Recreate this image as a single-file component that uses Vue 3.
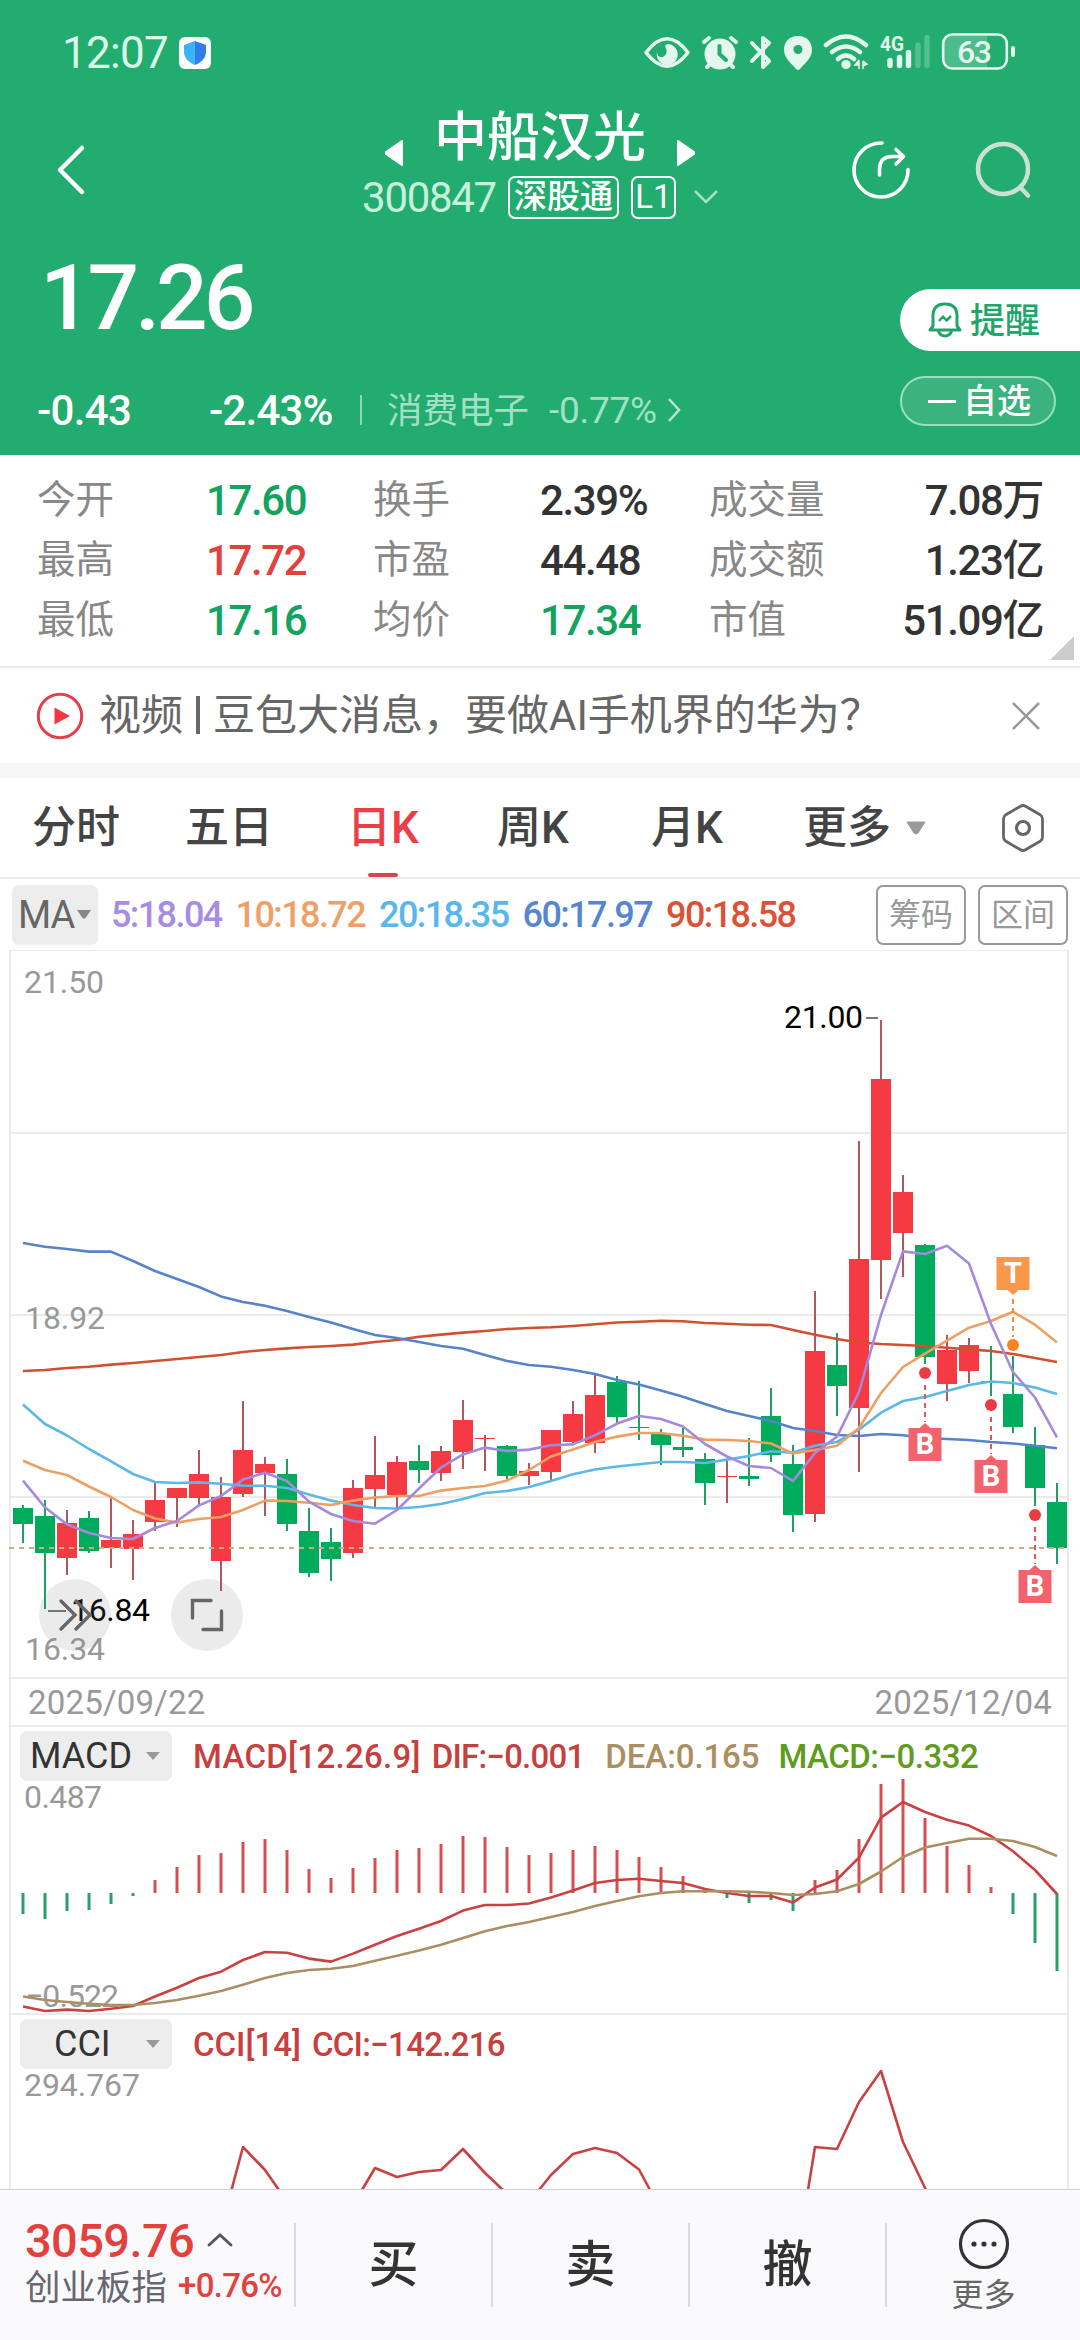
<script setup>
// candle: [direction, high, low, body top, body bottom], in chart canvas units
const candles = [
    ['down', 1505, 1543, 1508, 1524], ['down', 1500, 1609, 1516, 1553], ['up', 1510, 1575, 1523, 1558],
    ['down', 1511, 1553, 1518, 1551], ['up', 1498, 1568, 1540, 1548], ['up', 1520, 1580, 1534, 1549],
    ['up', 1483, 1531, 1500, 1522], ['up', 1488, 1527, 1488, 1498], ['up', 1450, 1505, 1474, 1498],
    ['up', 1477, 1591, 1497, 1561], ['up', 1401, 1497, 1450, 1494], ['up', 1457, 1516, 1464, 1473],
    ['down', 1459, 1531, 1474, 1524], ['down', 1508, 1577, 1531, 1573], ['down', 1528, 1581, 1542, 1559],
    ['up', 1480, 1558, 1488, 1553], ['up', 1436, 1507, 1475, 1489], ['up', 1456, 1511, 1462, 1495],
    ['down', 1445, 1483, 1461, 1470], ['up', 1446, 1481, 1451, 1473], ['up', 1400, 1469, 1420, 1452],
    ['up', 1435, 1471, 1438, 1439], ['down', 1445, 1479, 1446, 1476], ['up', 1463, 1485, 1471, 1476],
    ['up', 1430, 1482, 1430, 1472], ['up', 1401, 1443, 1414, 1442], ['up', 1375, 1453, 1395, 1443],
    ['down', 1376, 1423, 1382, 1417], ['down', 1381, 1440, 1427, 1428], ['down', 1429, 1465, 1434, 1445],
    ['down', 1428, 1457, 1447, 1450], ['down', 1453, 1505, 1459, 1483], ['up', 1461, 1503, 1476, 1477],
    ['down', 1438, 1486, 1476, 1479], ['down', 1388, 1462, 1416, 1455], ['down', 1445, 1532, 1464, 1515],
    ['up', 1291, 1522, 1351, 1514], ['down', 1333, 1416, 1365, 1386], ['up', 1141, 1472, 1259, 1408],
    ['up', 1020, 1299, 1079, 1260], ['up', 1175, 1277, 1192, 1233], ['down', 1244, 1364, 1245, 1357],
    ['up', 1335, 1401, 1350, 1384], ['up', 1338, 1383, 1345, 1371], ['down', 1346, 1396, 1381, 1382],
    ['down', 1356, 1433, 1394, 1427], ['down', 1427, 1506, 1445, 1488], ['down', 1483, 1564, 1502, 1548]
]

const averages = [
    {
        name: 'ma90', label: '90:18.58',
        data: [1371, 1370, 1368, 1366.7, 1364.6, 1363, 1361, 1359, 1357, 1355, 1352, 1350, 1348.4, 1347, 1346, 1344.6, 1342, 1340, 1336.7, 1334.6, 1332.6, 1331, 1329, 1328, 1327.3, 1326, 1324.3, 1322.5, 1321.7, 1320.8, 1321.2, 1323, 1323.8, 1324.7, 1325, 1330, 1334.7, 1339, 1342.5, 1344, 1345, 1346, 1347.7, 1349.4, 1351, 1354, 1358, 1362]
    },
    {
        name: 'ma60', label: '60:17.97',
        data: [1243, 1246.8, 1249, 1251.6, 1251.6, 1261, 1271, 1279, 1287, 1296.4, 1302, 1305.7, 1311, 1317, 1322.6, 1329, 1335, 1338, 1342, 1346, 1348.7, 1355, 1361, 1365, 1366.8, 1370, 1374, 1380, 1384.5, 1390.6, 1396.7, 1404, 1411, 1416, 1421, 1428, 1431, 1435, 1436, 1434, 1435.3, 1438, 1439, 1440, 1442, 1443.5, 1445.7, 1448.3]
    },
    {
        name: 'ma20', label: '20:18.35',
        data: [1404.5, 1424, 1435.5, 1449, 1461.3, 1474, 1482, 1483, 1482.4, 1483.7, 1485.8, 1485.8, 1488, 1494.4, 1500.6, 1505, 1508, 1508.5, 1507, 1504, 1499, 1493, 1491, 1487, 1481, 1474.3, 1469.5, 1466.5, 1464.3, 1462, 1462, 1463, 1459.6, 1456, 1451.3, 1452.6, 1445.7, 1442, 1429.6, 1412.7, 1401, 1397, 1391, 1385, 1381.5, 1383, 1387.6, 1394]
    },
    {
        name: 'ma10', label: '10:18.72',
        data: [1460.7, 1470, 1475, 1486.5, 1497, 1510, 1518.5, 1522.6, 1519, 1517, 1510, 1500.6, 1501, 1502.7, 1505, 1500.6, 1497.5, 1496, 1496, 1490.6, 1488, 1486, 1480.6, 1470, 1456.5, 1449.6, 1442, 1436.6, 1433, 1433, 1435.7, 1439.6, 1440, 1441, 1443.5, 1453.5, 1450, 1445.7, 1428, 1393, 1367, 1353.7, 1340.7, 1327.7, 1321, 1311.7, 1324.7, 1342.5]
    },
    {
        name: 'ma5', label: '5:18.04',
        data: [1480.6, 1507.5, 1524.4, 1533, 1538, 1539, 1528, 1521, 1505.4, 1496, 1479.6, 1472.7, 1481, 1501.6, 1514, 1521, 1523.7, 1510, 1488.5, 1467.5, 1454.4, 1447.6, 1451, 1449.6, 1445.3, 1444.4, 1435.3, 1423.6, 1416, 1419, 1426.6, 1444, 1456.5, 1466, 1468, 1481, 1453, 1436.6, 1392, 1315, 1251.4, 1254, 1245.8, 1263.5, 1324, 1372, 1397.5, 1437.4]
    }
]
const legend = [...averages].reverse()

const macdBars = [1914, 1919, 1911, 1910, 1904, 1896, 1880, 1867, 1855, 1853, 1842, 1839, 1850, 1869, 1878, 1868, 1858, 1850, 1848, 1844, 1836, 1837, 1847, 1855, 1853, 1850, 1846, 1850, 1857, 1867, 1876, 1891, 1898, 1903, 1900, 1911, 1880, 1870, 1839, 1784, 1779, 1818, 1846, 1865, 1887, 1914, 1943, 1971]
const dif = [2006.6, 2011, 2009.6, 2011, 2008.7, 2006, 1996.5, 1987.7, 1978, 1971.7, 1960, 1952, 1952.7, 1958.6, 1961.6, 1953.6, 1944.7, 1936, 1928.7, 1921, 1910.6, 1905, 1905, 1903.5, 1897.6, 1890.4, 1883, 1880, 1878.7, 1881, 1883, 1889, 1893, 1896, 1896, 1902.6, 1887.5, 1879.5, 1857.6, 1817.6, 1802, 1812, 1819.7, 1825.6, 1836, 1851.3, 1870, 1894]
const dea = [1996.5, 2000, 2002, 2003.7, 2005, 2005, 2003, 2000, 1995.7, 1991, 1984.7, 1978, 1973, 1970, 1968.7, 1966, 1960.7, 1955.7, 1950.6, 1944.7, 1938, 1931.3, 1926, 1922, 1917, 1912, 1906, 1901, 1896.3, 1893, 1891.3, 1891.3, 1891.3, 1891.7, 1893, 1895, 1894, 1891.3, 1884, 1871.5, 1857, 1847.5, 1843, 1838.7, 1838.7, 1841, 1847, 1856]

const cci = [
    '231.5,2190 243,2147 265,2170 279,2190',
    '362,2190 375,2168 397,2177 419,2172 441,2170 463,2149 485,2173 503,2190',
    '539,2190 551,2175 573,2154 595,2148 617,2153 639,2169.5 650,2190',
    '808,2190 815,2147 837,2149 859,2102 881,2071 903,2142 926,2190'
]

const signals = [
    { type: 'B', x: 925, dot: 1373, box: 1428 },
    { type: 'B', x: 991, dot: 1405, box: 1460 },
    { type: 'B', x: 1035, dot: 1515, box: 1570 },
    { type: 'T', x: 1013, dot: 1345, box: 1257 }
]

const quotes = [
    ['今开', '17.60', 'down', '换手', '2.39%', '', '成交量', '7.08万'],
    ['最高', '17.72', 'up', '市盈', '44.48', '', '成交额', '1.23亿'],
    ['最低', '17.16', 'down', '均价', '17.34', 'down', '市值', '51.09亿']
]

const x = (i) => 23 + i * 22
const line = (data) => data.map((y, i) => `${x(i)},${y}`).join(' ')
</script>

<template>
    <div class="page">
        <header class="header">
            <div class="status">
                <span class="clock">12:07</span>
                <svg class="shield" width="32" height="32" viewBox="0 0 32 32">
                    <rect width="32" height="32" rx="6" fill="#fff" />
                    <path d="M16 4 L27 8 V16 Q26 24 16 28 Z" fill="#2f7de8" />
                    <path d="M16 4 L5 8 V16 Q6 24 16 28 Z" fill="#3db2f5" />
                </svg>
                <svg class="status-icons" width="376" height="42" viewBox="642 32 376 42" fill="none" stroke="#e3f7ee">
                    <path d="M646 52.500 Q667 25 688 52.500 Q667 80 646 52.500 Z" stroke-width="3.600" stroke-linejoin="round" />
                    <path d="M667 44 A10.500 10.500 0 1 1 657 52 Q657 58 663 57 Q669 54 665 46 Z" fill="#e3f7ee" stroke="none" />
                    <circle cx="720" cy="54" r="15.500" fill="#e3f7ee" stroke="none" />
                    <path d="M704 42 L709 38 M736 42 L731 38 M707 67 L711 63 M733 67 L729 63" stroke-width="4" stroke-linecap="round" />
                    <path d="M719.500 46 V54 L726 60" stroke="#22ac6f" stroke-width="4" stroke-linecap="round" />
                    <path d="M752 43 L769 61 L763 67 V38 L769 43 L752 61" stroke-width="4" stroke-linecap="round" stroke-linejoin="round" />
                    <path d="M798 36 C788 36 784 43 784 50 C784 58 792 64 796 69 Q798 71 800 69 C804 64 812 58 812 50 C812 43 808 36 798 36 Z" fill="#e3f7ee" stroke="none" />
                    <circle cx="798" cy="49.500" r="4.500" fill="#22ac6f" stroke="none" />
                    <path d="M826 45 Q846 28 866 45 M832 52 Q846 41 860 52 M838 59 Q846 52 854 59" stroke-width="4.500" stroke-linecap="round" />
                    <circle cx="846" cy="64.500" r="4.600" fill="#e3f7ee" stroke="none" />
                    <path d="M859 60 V69 M859 60 L855 65 H859 M863 61 V69 M863 61 L867 64 L863 66" fill="#e3f7ee" stroke-width="1.500" />
                    <path d="M890 60.500 V65.500 M899.500 57.500 V65.500 M908.500 52.500 V65.500" stroke-width="5.400" stroke-linecap="round" />
                    <path d="M918 45 V65.500 M927 37.500 V65.500" stroke-width="5.400" stroke-linecap="round" opacity=".26" />
                    <path d="M944 41 Q944 36 950 36 H987 V68 H950 Q944 68 944 63 Z" fill="#4dbc8b" stroke="none" />
                    <rect x="943.200" y="34.500" width="63.600" height="34" rx="9" stroke-width="2.600" />
                    <path d="M1013 48 V55" stroke-width="4" stroke-linecap="round" />
                    <text x="880" y="51" class="net" textLength="24" lengthAdjust="spacingAndGlyphs">4G</text>
                    <text x="957" y="63" class="battery">63</text>
                </svg>
            </div>

            <nav class="nav">
                <svg class="back" width="30" height="52" viewBox="0 0 30 52">
                    <path d="M26 4 L4 26 L26 48" fill="none" stroke="#fff" stroke-width="4.500" stroke-linecap="round" stroke-linejoin="round" />
                </svg>
                <div class="title">
                    <div class="title-main">
                        <svg width="18" height="26" viewBox="0 0 18 26"><path d="M17 1 V25 L1 14 V12 Z" fill="#fff" stroke="#fff" stroke-width="2" stroke-linejoin="round" /></svg>
                        <h1>中船汉光</h1>
                        <svg width="18" height="26" viewBox="0 0 18 26"><path d="M1 1 V25 L17 14 V12 Z" fill="#fff" stroke="#fff" stroke-width="2" stroke-linejoin="round" /></svg>
                    </div>
                    <div class="title-sub">
                        <span class="code">300847</span>
                        <span class="tag">深股通</span>
                        <span class="tag tag-level">L1</span>
                        <svg width="24" height="14" viewBox="0 0 24 14"><path d="M1 1 L12 12 L23 1" fill="none" stroke="#a5dfc6" stroke-width="2.500" /></svg>
                    </div>
                </div>
                <svg class="share" width="62" height="62" viewBox="0 0 62 62" fill="none" stroke="#fff" stroke-width="3.600" stroke-linecap="round" stroke-linejoin="round">
                    <path d="M32 3 A27 27 0 1 0 58 29.500" />
                    <path d="M29.500 35 V29 Q30 16.500 42 16.500 H53 M46 9.500 L53.500 16.500 L46 24" />
                </svg>
                <svg class="search" width="58" height="62" viewBox="0 0 58 62" fill="none" stroke="#cbe0d5" stroke-width="4.500">
                    <circle cx="28" cy="29" r="25" />
                    <path d="M45 47 L53 55.500" stroke-linecap="round" />
                </svg>
            </nav>

            <div class="price-area">
                <div class="price-left">
                    <div class="price">17.26</div>
                    <div class="change">
                        <span class="diff">-0.43</span>
                        <span class="rate">-2.43%</span>
                        <i class="bar"></i>
                        <span class="sector">消费电子</span>
                        <span class="sector-rate">-0.77%</span>
                        <svg width="14" height="24" viewBox="0 0 14 24"><path d="M2 1 L12 12 L2 23" fill="none" stroke="#b5e6d0" stroke-width="2.500" /></svg>
                    </div>
                </div>
                <div class="price-right">
                    <button class="remind">
                        <svg width="34" height="36" viewBox="0 0 34 36" fill="none" stroke="#22a56a" stroke-width="3" stroke-linejoin="round">
                            <path d="M2 28 L5 24 V14 Q5 2 17 2 Q29 2 29 14 V24 L32 28 Z" />
                            <path d="M10 28 Q12 34 17 34 Q22 34 24 28" />
                            <path d="M11 19 L15 14.500 L18.500 18.500 L23 14" stroke-width="2.500" />
                        </svg>
                        <span>提醒</span>
                    </button>
                    <button class="favorite"><i class="minus"></i><span>自选</span></button>
                </div>
            </div>
        </header>

        <section class="quotes">
            <div v-for="q in quotes" :key="q[0]" class="quote-row">
                <span class="label">{{ q[0] }}</span>
                <span class="value" :class="q[2]">{{ q[1] }}</span>
                <span class="label">{{ q[3] }}</span>
                <span class="value" :class="q[5]">{{ q[4] }}</span>
                <span class="label">{{ q[6] }}</span>
                <span class="value right">{{ q[7] }}</span>
            </div>
            <i class="corner"></i>
        </section>

        <section class="news">
            <svg width="48" height="48" viewBox="0 0 48 48">
                <circle cx="24" cy="24" r="21.700" fill="none" stroke="#e2414b" stroke-width="3" />
                <path d="M18.500 15.500 L34 24 L18.500 32.500 Z" fill="#f33640" />
            </svg>
            <p>视频<i></i>豆包大消息，要做AI手机界的华为？</p>
            <svg class="news-close" width="28" height="28" viewBox="0 0 28 28"><path d="M1 1 L27 27 M27 1 L1 27" stroke="#999" stroke-width="2.500" /></svg>
        </section>

        <nav class="tabs">
            <span>分时</span>
            <span>五日</span>
            <span class="active">日K</span>
            <span>周K</span>
            <span>月K</span>
            <span class="more">更多<svg width="20" height="14" viewBox="0 0 20 14"><path d="M1 1 H19 L12 12 Q10 14 8 12 Z" fill="#999" stroke="#999" stroke-linejoin="round" /></svg></span>
            <svg class="settings" width="44" height="50" viewBox="0 0 44 50" fill="none" stroke="#666">
                <path d="M22 2.500 Q23.500 2.500 25 3.500 L39.500 12 Q41.500 13.500 41.500 16 V34 Q41.500 36.500 39.500 38 L25 46.500 Q22 48.500 19 46.500 L4.500 38 Q2.500 36.500 2.500 34 V16 Q2.500 13.500 4.500 12 L19 3.500 Q20.500 2.500 22 2.500 Z" stroke-width="2.800" />
                <circle cx="22" cy="25" r="6.500" stroke-width="3.200" />
            </svg>
        </nav>

        <div class="ma-row">
            <span class="ma-chip">MA<svg width="14" height="9" viewBox="0 0 14 9"><path d="M0 0 H14 L8.500 8 Q7 9.500 5.500 8 Z" fill="#888" /></svg></span>
            <span v-for="m in legend" :key="m.name" class="ma-value" :class="m.name">{{ m.label }}</span>
            <button class="ghost first">筹码</button>
            <button class="ghost">区间</button>
        </div>

        <main class="charts">
            <svg class="panel price-panel" width="1056" height="726" viewBox="11 951 1056 726">
                <path class="grid" d="M11 1133 H1067 M11 1315 H1067 M11 1497 H1067" />
                <text class="axis" x="24" y="993" textLength="80">21.50</text>
                <text class="axis" x="25" y="1329" textLength="80">18.92</text>
                <text class="axis" x="25" y="1660" textLength="80">16.34</text>
                <g v-for="(c, i) in candles" :key="i" :class="c[0]">
                    <rect class="wick" :x="x(i) - 1" :y="c[1]" width="2" :height="c[2] - c[1]" />
                    <rect class="body" :x="x(i) - 10" :y="c[3]" width="20" :height="c[4] - c[3]" />
                </g>
                <polyline v-for="m in averages" :key="m.name" class="curve" :class="m.name" :points="line(m.data)" />
                <path class="last" d="M9 1548 H1067" />

                <path d="M866 1018 H878 M48 1611 H66" stroke="#777" stroke-width="2" />
                <text class="mark" x="784" y="1028" textLength="79">21.00</text>
                <text class="mark" x="71" y="1621" textLength="79">16.84</text>

                <g v-for="s in signals" :key="s.x" :class="'signal-' + s.type">
                    <template v-if="s.type === 'B'">
                        <path class="lead" :d="`M${s.x} ${s.dot + 12} V${s.box - 6}`" />
                        <path class="flag" :d="`M${s.x - 16.500} ${s.box} h11 l5.500 -5 l5.500 5 h11 v33 h-33 z`" />
                    </template>
                    <template v-else>
                        <path class="lead" :d="`M${s.x} ${s.box + 42} V${s.dot - 8}`" />
                        <path class="flag" :d="`M${s.x - 16.500} ${s.box} h33 v33 h-11 l-5.500 5 l-5.500 -5 h-11 z`" />
                    </template>
                    <circle :cx="s.x" :cy="s.dot" r="6" />
                    <text class="letter" :x="s.x" :y="s.box + 26">{{ s.type }}</text>
                </g>

                <circle class="tool" cx="75" cy="1615" r="36" />
                <circle class="tool" cx="207" cy="1615" r="36" />
                <path class="tool-icon" d="M61 1601 L75 1615 L61 1629 M76 1601 L90 1615 L76 1629" />
                <path class="tool-icon" d="M192.500 1618 V1600.500 H211 M203 1629.500 H221.500 V1611" />
            </svg>

            <div class="dates"><span>2025/09/22</span><span>2025/12/04</span></div>

            <div class="indicator">
                <span class="chip">MACD<i></i></span>
                <span class="red params">MACD[12.26.9]</span>
                <span class="red dif">DIF:−0.001</span>
                <span class="tan">DEA:0.165</span>
                <span class="green">MACD:−0.332</span>
            </div>
            <svg class="panel" width="1056" height="230" viewBox="11 1783 1056 230">
                <text class="axis" x="24" y="1808" textLength="78">0.487</text>
                <text class="axis" x="25" y="2007" textLength="94">−0.522</text>
                <path
                    v-for="(b, i) in macdBars"
                    :key="i"
                    class="macd-bar"
                    :class="b > 1893 ? 'down' : 'up'"
                    :d="`M${x(i)} 1893 V${b}`"
                />
                <polyline class="curve red-line" :points="line(dif)" />
                <polyline class="curve tan-line" :points="line(dea)" />
            </svg>

            <div class="indicator">
                <span class="chip chip-cci">CCI<i></i></span>
                <span class="red">CCI[14]</span>
                <span class="red cci-value">CCI:−142.216</span>
            </div>
            <svg class="panel" width="1056" height="118" viewBox="11 2071 1056 118">
                <text class="axis" x="24" y="2096" textLength="116">294.767</text>
                <polyline v-for="p in cci" :key="p" class="curve red-line" :points="p" />
            </svg>
        </main>

        <footer class="footer">
            <div class="index">
                <div class="index-top">
                    <span>3059.76</span>
                    <svg width="26" height="14" viewBox="0 0 26 14"><path d="M2 12 L13 2 L24 12" fill="none" stroke="#555" stroke-width="2.800" stroke-linecap="round" /></svg>
                </div>
                <div class="index-bottom"><span>创业板指</span><em>+0.76%</em></div>
            </div>
            <button class="trade">买</button>
            <button class="trade">卖</button>
            <button class="trade">撤</button>
            <button class="trade-more">
                <svg width="52" height="52" viewBox="0 0 52 52">
                    <circle cx="26" cy="26" r="23.500" fill="none" stroke="#333" stroke-width="3.200" />
                    <circle cx="16" cy="26" r="2.600" fill="#333" />
                    <circle cx="26" cy="26" r="2.600" fill="#333" />
                    <circle cx="36" cy="26" r="2.600" fill="#333" />
                </svg>
                <span>更多</span>
            </button>
        </footer>
    </div>
</template>

<style>
body {
    margin: 0;
    background: #fff;
}
</style>

<style scoped>
.page {
    width: 1080px;
    height: 2340px;
    overflow: hidden;
    display: flex;
    flex-direction: column;
    background: #fff;
    font-family: Roboto, 'Noto Sans CJK SC', sans-serif;
    color: #333;
}

.page svg {
    display: block;
    flex: none;
}

button {
    font-family: inherit;
    border: none;
    background: none;
    padding: 0;
    margin: 0;
}

span {
    white-space: nowrap;
}

/* Header */
.header {
    height: 455px;
    background: #22ac6f;
    color: #fff;
}

.status {
    height: 106px;
    box-sizing: border-box;
    padding: 0 62px;
    display: flex;
    align-items: center;
}

.clock {
    font-size: 44px;
    line-height: 106px;
    width: 117px;
    letter-spacing: -0.7px;
    color: #dcfaea;
}

.status-icons {
    margin-left: auto;
}

.net {
    font-size: 21px;
    font-weight: 700;
    fill: #e3f7ee;
    stroke: none;
}

.battery {
    font-size: 32px;
    font-weight: 500;
    letter-spacing: -1.5px;
    fill: #e3f7ee;
    stroke: none;
}

.nav {
    height: 130px;
    display: flex;
    align-items: flex-start;
}

.back {
    margin: 38px 0 0 56px;
}

.title {
    width: 400px;
    margin-left: 254px;
    display: flex;
    flex-direction: column;
    align-items: center;
}

.title-main {
    height: 64px;
    display: flex;
    align-items: flex-end;
    gap: 31px;
}

.title-main svg {
    margin-bottom: 4px;
}

h1 {
    margin: 0;
    font-size: 53px;
    font-weight: 500;
    line-height: 64px;
}

.title-sub {
    display: flex;
    align-items: center;
    height: 54px;
    gap: 12px;
}

.code {
    font-size: 42px;
    letter-spacing: -1.3px;
    color: #c6f0dc;
}

.tag {
    box-sizing: border-box;
    width: 111px;
    height: 43px;
    border: 2px solid #fff;
    border-radius: 7px;
    font-size: 33px;
    font-weight: 500;
    line-height: 37px;
    text-align: center;
}

.tag-level {
    width: 45px;
    font-weight: 400;
}

.title-sub svg {
    margin-left: 6px;
}

.share {
    margin: 34px 0 0 110px;
}

.search {
    margin: 34px 0 0 63px;
}

.price-area {
    display: flex;
    justify-content: space-between;
}

.price {
    margin: 18px 0 0 40px;
    height: 88px;
    font-size: 91px;
    font-weight: 500;
    line-height: 88px;
    letter-spacing: -4.2px;
}

.change {
    display: flex;
    align-items: center;
    height: 50px;
    margin: 43px 0 0 37px;
    font-size: 42px;
}

.diff {
    width: 172px;
    letter-spacing: -0.7px;
    font-weight: 500;
}

.rate {
    width: 151px;
    letter-spacing: -0.8px;
    font-weight: 500;
}

.bar {
    width: 2px;
    height: 30px;
    background: #8fd6b6;
}

.sector {
    margin: -5px 0 0 25px;
    font-size: 35.5px;
    color: #a2e0c5;
}

.sector-rate {
    margin: 0 10px 0 20px;
    font-size: 37px;
    letter-spacing: -0.3px;
    color: #a2e0c5;
}

.price-right {
    width: 180px;
    margin-top: 53px;
}

.remind {
    width: 180px;
    height: 62px;
    border-radius: 31px 0 0 31px;
    background: #fff;
    color: #22a56a;
    display: flex;
    align-items: center;
    gap: 8px;
    padding-left: 28px;
    font-size: 35px;
    font-weight: 500;
}

.remind span,
.favorite span {
    margin-top: -5px;
}

.favorite {
    box-sizing: border-box;
    width: 156px;
    height: 50px;
    margin-top: 25px;
    border: 2px solid #9adfc0;
    border-radius: 25px;
    background: #3ab37e;
    color: #fff;
    display: flex;
    align-items: center;
    gap: 7px;
    padding-left: 26px;
    font-size: 34px;
    font-weight: 500;
}

.minus {
    width: 28px;
    height: 3px;
    background: #fff;
}

/* Quote table */
.quotes {
    position: relative;
    box-sizing: border-box;
    height: 213px;
    padding: 15px 37px 0;
    border-bottom: 2px solid #ebebeb;
}

.quote-row {
    display: grid;
    grid-template-columns: 169px 167px 167px 169px 130px 1fr;
    height: 60px;
    align-items: center;
}

.label {
    padding-bottom: 3px;
    font-size: 38.5px;
    color: #888;
    line-height: 57px;
}

.value {
    font-size: 42px;
    line-height: 62px;
    font-weight: 500;
    letter-spacing: -1.4px;
}

.value.right {
    text-align: right;
}

.value.down {
    color: #12a35e;
}

.value.up {
    color: #e2413d;
}

.corner {
    position: absolute;
    right: 6px;
    bottom: 6px;
    border-style: solid;
    border-width: 0 0 24px 24px;
    border-color: transparent transparent #ccc transparent;
}

/* News strip */
.news {
    height: 95px;
    display: flex;
    align-items: center;
    padding: 0 40px 0 36px;
    border-bottom: 15px solid #f7f7f7;
}

.news p {
    margin: -9px 0 0 15px;
    display: flex;
    align-items: center;
    font-size: 42px;
    color: #666;
}

.news p i {
    width: 4px;
    height: 38px;
    margin: 7px 13px 0 13px;
    background: #666;
}

.news-close {
    margin-left: auto;
}

/* Period tabs */
.tabs {
    box-sizing: border-box;
    height: 101px;
    padding: 0 35px 0 32px;
    display: grid;
    grid-template-columns: 153px 162px 150px 154px 152px 1fr auto;
    align-items: center;
    border-bottom: 2px solid #ebebeb;
    font-size: 44px;
    font-weight: 500;
    color: #444;
}

.tabs span {
    position: relative;
    justify-self: start;
    line-height: 98px;
}

.tabs .active {
    color: #ec3e47;
}

.tabs .active::after {
    content: '';
    position: absolute;
    left: 50%;
    bottom: 0;
    width: 30px;
    height: 4px;
    margin-left: -15px;
    border-radius: 2px;
    background: #d8464e;
}

.tabs .more {
    display: flex;
    align-items: center;
    gap: 15px;
}

/* Moving averages */
.ma-row {
    box-sizing: border-box;
    height: 71px;
    padding: 0 12px;
    display: flex;
    align-items: center;
}

.ma-chip {
    width: 80px;
    height: 60px;
    padding-left: 6px;
    margin-right: 13px;
    border-radius: 7px;
    background: #ededed;
    display: flex;
    align-items: center;
    gap: 3px;
    font-size: 38px;
    letter-spacing: -1px;
    color: #666;
}

.ma-value {
    margin-right: 14px;
    font-size: 36px;
    font-weight: 500;
    letter-spacing: -1.6px;
}

span.ma5 { color: #a78ce4; }
span.ma10 { color: #efa068; }
span.ma20 { color: #58b8ec; }
span.ma60 { color: #5686d2; }
span.ma90 { color: #db5236; }

.ghost {
    box-sizing: border-box;
    width: 90px;
    height: 60px;
    margin-left: 12px;
    padding-bottom: 5px;
    border: 2px solid #999;
    border-radius: 7px;
    font-size: 32px;
    color: #999;
}

.ghost.first {
    margin-left: auto;
}

/* Charts */
.charts {
    box-sizing: border-box;
    width: 1060px;
    height: 1239px;
    margin-left: 9px;
    border: 2px solid #ebebeb;
    border-bottom: none;
    border-top-width: 1px;
}

.panel {
    overflow: visible;
}

.grid {
    stroke: #ebebeb;
    stroke-width: 2;
    fill: none;
}

.axis {
    font-size: 32px;
    fill: #999;
}

.mark {
    font-size: 32px;
    fill: #000;
}

.up .wick { fill: #b2575c; }
.up .body { fill: #f53a43; }
.down .wick { fill: #1da062; }
.down .body { fill: #00ab5c; }

.curve {
    fill: none;
    stroke-width: 2.6;
    stroke-linejoin: round;
}

.curve.ma5 { stroke: #a48ade; }
.curve.ma10 { stroke: #eca062; }
.curve.ma20 { stroke: #5cb8e6; }
.curve.ma60 { stroke: #5583cb; }
.curve.ma90 { stroke: #d2502f; }

.last {
    stroke: #c4b183;
    stroke-width: 2;
    stroke-dasharray: 5 5;
}

.signal-B .lead { stroke: #e2545c; }
.signal-B .flag { fill: #f1636d; }
.signal-B circle { fill: #ea3b45; }
.signal-T .lead { stroke: #f0903f; }
.signal-T .flag { fill: #fb974b; }
.signal-T circle { fill: #fa8126; }

.lead {
    stroke-width: 2;
    stroke-dasharray: 5 4;
}

.letter {
    font-size: 29px;
    font-weight: 700;
    fill: #fff;
    text-anchor: middle;
}

.tool {
    fill: rgba(120, 120, 120, 0.15);
}

.tool-icon {
    fill: none;
    stroke: #666;
    stroke-width: 3.4;
    stroke-linecap: round;
}

.dates {
    box-sizing: border-box;
    height: 48px;
    padding: 0 15px 0 17px;
    border-top: 2px solid #ebebeb;
    display: flex;
    justify-content: space-between;
    align-items: center;
    font-size: 33px;
    letter-spacing: 0.2px;
    color: #999;
}

.indicator {
    box-sizing: border-box;
    height: 58px;
    padding: 6px 0 4px 9px;
    border-top: 2px solid #ebebeb;
    display: flex;
    align-items: center;
    font-size: 33px;
    font-weight: 500;
}

.chip {
    position: relative;
    box-sizing: border-box;
    width: 152px;
    height: 50px;
    margin-right: 21px;
    padding-left: 10px;
    border-radius: 7px;
    background: #ededed;
    font-size: 36px;
    font-weight: 400;
    line-height: 50px;
}

.chip i {
    position: absolute;
    right: 12px;
    top: 21px;
    border-style: solid;
    border-width: 8px 7px 0;
    border-color: #999 transparent transparent;
}

.chip-cci {
    padding-left: 34px;
}

.red { color: #c8403e; }
.tan { color: #ab8e62; margin: 0 19px 0 21px; letter-spacing: -0.1px; }
.green { color: #5e9c1c; letter-spacing: -0.5px; }
.params { letter-spacing: 0.3px; }
.dif { margin-left: 11px; letter-spacing: -0.8px; }
.cci-value { margin-left: 11px; letter-spacing: -0.7px; }

.macd-bar {
    stroke-width: 3;
}

.macd-bar.up { stroke: #d44e52; }
.macd-bar.down { stroke: #27a168; }
.red-line { stroke: #cb4141; }
.tan-line { stroke: #ab8e62; }

/* Bottom bar */
.footer {
    position: relative;
    box-sizing: border-box;
    height: 151px;
    border-top: 1px solid #d0d0d2;
    background: #fafafc;
    display: flex;
}

.index {
    box-sizing: border-box;
    width: 294px;
    padding: 24px 0 0 25px;
}

.index-top {
    display: flex;
    align-items: center;
    gap: 13px;
    height: 52px;
    font-size: 47px;
    font-weight: 500;
    letter-spacing: -0.6px;
    color: #e2413d;
}

.index-bottom {
    display: flex;
    align-items: center;
    gap: 11px;
    height: 36px;
    font-size: 35.5px;
    color: #666770;
}

.index-bottom em {
    margin-top: 3px;
    font-style: normal;
    font-size: 33px;
    font-weight: 500;
    letter-spacing: -0.7px;
    color: #e2413d;
}

.trade,
.trade-more {
    height: 84px;
    margin-top: 33px;
    border-left: 2px solid #dcdcdf;
}

.trade {
    width: 197px;
    font-size: 50px;
    font-weight: 500;
    line-height: 84px;
    color: #333;
}

.trade-more {
    width: 195px;
    display: flex;
    flex-direction: column;
    align-items: center;
    color: #666;
}

.trade-more svg {
    margin-top: -5px;
}

.trade-more span {
    font-size: 32px;
    line-height: 50px;
}
</style>
